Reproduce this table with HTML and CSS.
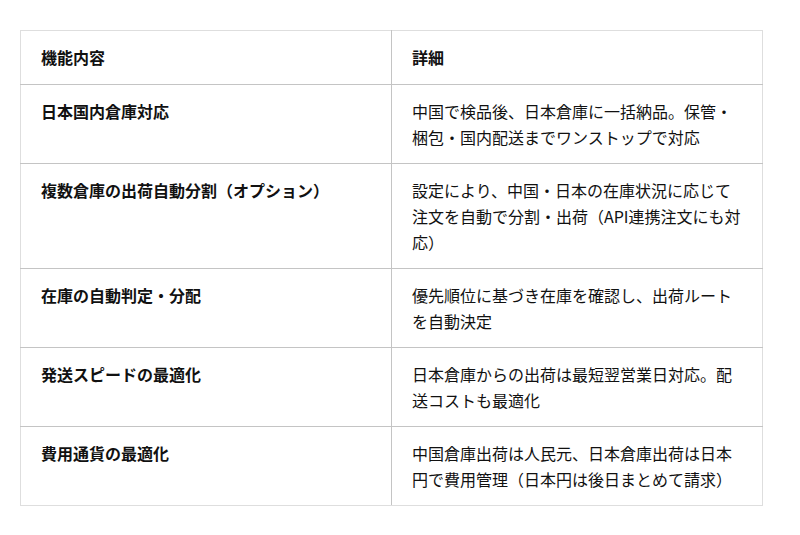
FILE: index.html
```html
<!DOCTYPE html>
<html lang="ja">
<head>
<meta charset="utf-8">
<title>機能内容</title>
<link rel="stylesheet" href="styles.css">
</head>
<body>
<table class="spec">
  <thead>
    <tr><th>機能内容</th><th>詳細</th></tr>
  </thead>
  <tbody>
    <tr><th>日本国内倉庫対応</th><td>中国で検品後、日本倉庫に一括納品。保管・梱包・国内配送までワンストップで対応</td></tr>
    <tr><th>複数倉庫の出荷自動分割（オプション）</th><td>設定により、中国・日本の在庫状況に応じて注文を自動で分割・出荷（API連携注文にも対応）</td></tr>
    <tr><th>在庫の自動判定・分配</th><td>優先順位に基づき在庫を確認し、出荷ルートを自動決定</td></tr>
    <tr><th>発送スピードの最適化</th><td>日本倉庫からの出荷は最短翌営業日対応。配送コストも最適化</td></tr>
    <tr><th>費用通貨の最適化</th><td>中国倉庫出荷は人民元、日本倉庫出荷は日本円で費用管理（日本円は後日まとめて請求）</td></tr>
  </tbody>
</table>
</body>
</html>
```

FILE: styles.css
```css
html, body {
  margin: 0;
  padding: 0;
  background: #ffffff;
}

body {
  padding: 30px 0 0 20px;
  font-family: "Noto Sans CJK JP", "Noto Sans", sans-serif;
  color: #111111;
}

.spec {
  width: 743px;
  border-collapse: collapse;
  table-layout: fixed;
  font-size: 16px;
  line-height: 26px;
}

.spec th,
.spec td {
  width: 50%;
  padding: 13px 20px;
  border: 1px solid #c4c4c4;
  text-align: left;
  vertical-align: top;
}

.spec thead th {
  padding-bottom: 14px;
}

.spec th {
  font-weight: 700;
}

.spec td {
  font-weight: 400;
}

.spec tr > :first-child {
  border-left-color: #dedede;
}

.spec tr > :last-child {
  border-right-color: #dedede;
}

.spec thead tr > * {
  border-top-color: #dedede;
}

.spec tbody tr:last-child > * {
  border-bottom-color: #dedede;
}
```
